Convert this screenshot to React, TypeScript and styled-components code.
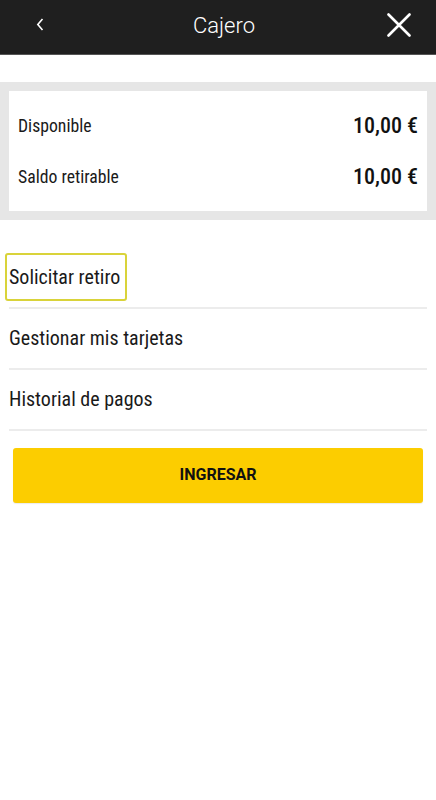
import React from "react";
import styled, { createGlobalStyle } from "styled-components";

const Global = createGlobalStyle`
  html, body { margin: 0; padding: 0; background: #fff; }
  body { font-family: Roboto, "Noto Sans", sans-serif; font-stretch: condensed; }
  * { box-sizing: border-box; }
`;

const Page = styled.div`
  width: 436px;
  min-height: 800px;
  background: #fff;
  display: flex;
  flex-direction: column;
`;

const Header = styled.header`
  height: 55px;
  background: #1f1f1f;
  border-bottom: 1px solid #555;
  display: grid;
  grid-template-columns: 80px 1fr 80px;
  align-items: center;
  color: #fff;
`;

const Title = styled.h1`
  margin: 0;
  text-align: center;
  font-family: Roboto, sans-serif;
  font-stretch: normal;
  font-weight: 300;
  font-size: 22px;
  padding-left: 12px;
  padding-bottom: 4px;
`;

const IconButton = styled.button<{ $align: "start" | "end" }>`
  background: none;
  border: 0;
  padding: 0;
  display: flex;
  justify-content: ${(p) => (p.$align === "start" ? "flex-start" : "flex-end")};
  padding-left: ${(p) => (p.$align === "start" ? "36px" : "0")};
  padding-right: ${(p) => (p.$align === "end" ? "25px" : "0")};
  padding-bottom: 5px;
  color: #fff;
`;

const BalanceBand = styled.section`
  margin-top: 27px;
  background: #e6e6e6;
  padding: 9px 9px;
`;

const BalanceCard = styled.div`
  background: #fff;
  padding: 9px 9px 9px;
  display: flex;
  flex-direction: column;
`;

const BalanceRow = styled.div`
  height: 51px;
  display: flex;
  align-items: center;
  justify-content: space-between;
`;

const BalanceLabel = styled.span`
  font-size: 17.7px;
  color: #1a1a1a;
  font-weight: 400;
`;

const BalanceValue = styled.span`
  font-size: 22px;
  font-weight: 500;
  color: #111;
`;

const Menu = styled.nav`
  margin-top: 28px;
  padding: 0 9px;
  display: flex;
  flex-direction: column;
`;

const MenuItem = styled.div`
  height: 61px;
  display: flex;
  align-items: center;
  border-bottom: 2px solid #ececec;
  padding-bottom: 2px;
`;

const MenuLabel = styled.span<{ $focused?: boolean }>`
  font-size: 20px;
  line-height: 24px;
  color: #1a1a1a;
  font-weight: 400;
  padding: 10px 5px 10px 2px;
  margin-left: -4px;
  border: 2px solid ${(p) => (p.$focused ? "#d9d33a" : "transparent")};
  border-radius: 3px;
`;

const ButtonWrap = styled.div`
  padding: 17px 13px 0;
`;

const PrimaryButton = styled.button`
  width: 100%;
  height: 55px;
  padding: 0 0 3px;
  background: #fccd00;
  border: 0;
  border-radius: 3px;
  font-family: Roboto, sans-serif;
  font-stretch: normal;
  font-weight: 700;
  font-size: 16px;
  color: #111;
  box-shadow: 0 1px 1px rgba(0,0,0,0.08);
`;

export default function App() {
  return (
    <Page>
      <Global />
      <Header>
        <IconButton $align="start" aria-label="Atrás">
          <svg width="8" height="13" viewBox="0 0 8 13">
            <path d="M6.5 1 L1.8 6.5 L6.5 12" fill="none" stroke="#fff" strokeWidth="1.6" />
          </svg>
        </IconButton>
        <Title>Cajero</Title>
        <IconButton $align="end" aria-label="Cerrar">
          <svg width="24" height="24" viewBox="0 0 24 24">
            <path d="M1.5 1.5 L22.5 22.5 M22.5 1.5 L1.5 22.5" stroke="#fff" strokeWidth="2.6" strokeLinecap="round" />
          </svg>
        </IconButton>
      </Header>
      <BalanceBand>
        <BalanceCard>
          <BalanceRow>
            <BalanceLabel>Disponible</BalanceLabel>
            <BalanceValue>10,00 €</BalanceValue>
          </BalanceRow>
          <BalanceRow>
            <BalanceLabel>Saldo retirable</BalanceLabel>
            <BalanceValue>10,00 €</BalanceValue>
          </BalanceRow>
        </BalanceCard>
      </BalanceBand>
      <Menu>
        <MenuItem>
          <MenuLabel $focused>Solicitar retiro</MenuLabel>
        </MenuItem>
        <MenuItem>
          <MenuLabel>Gestionar mis tarjetas</MenuLabel>
        </MenuItem>
        <MenuItem>
          <MenuLabel>Historial de pagos</MenuLabel>
        </MenuItem>
      </Menu>
      <ButtonWrap>
        <PrimaryButton>INGRESAR</PrimaryButton>
      </ButtonWrap>
    </Page>
  );
}
